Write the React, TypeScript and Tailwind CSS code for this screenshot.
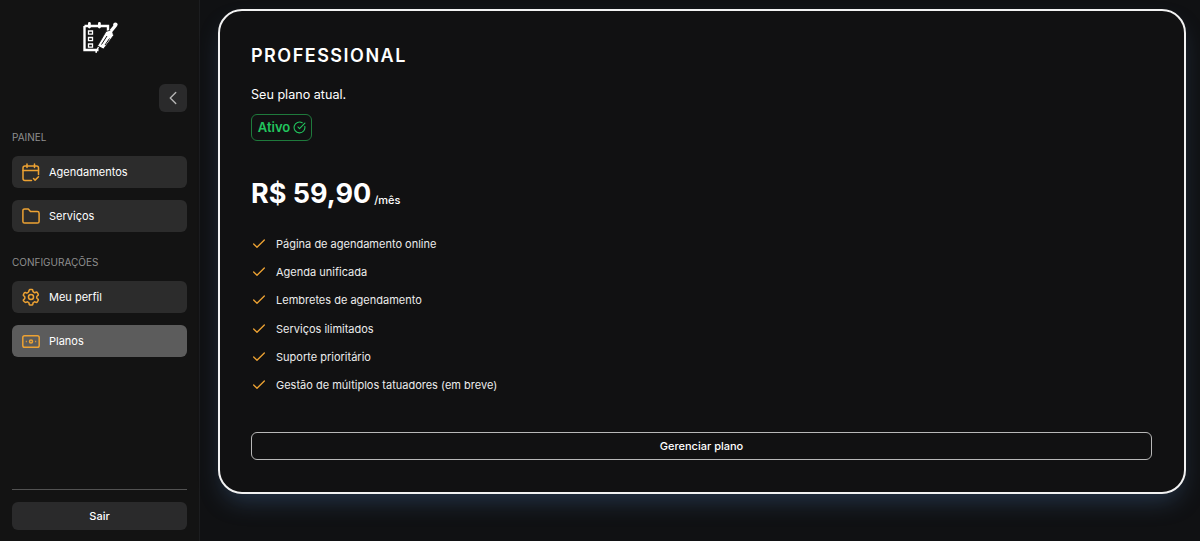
import { Check, ChevronLeft, CircleCheckBig } from "lucide-react";
import type { ReactNode } from "react";

const features = [
  "Página de agendamento online",
  "Agenda unificada",
  "Lembretes de agendamento",
  "Serviços ilimitados",
  "Suporte prioritário",
  "Gestão de múltiplos tatuadores (em breve)",
];

function Logo() {
  return (
    <svg width="36" height="32" viewBox="0 0 36 32" fill="none" className="text-white">
      <path d="M2.5 5h23.5v6M2.5 5v24h14" stroke="currentColor" strokeWidth="2.4" />
      <rect x="6" y="1" width="2.8" height="6.5" rx="1.4" fill="currentColor" />
      <rect x="16" y="1" width="2.8" height="6.5" rx="1.4" fill="currentColor" />
      <path d="M6.5 10h4v3.2h-4zM6.5 16.5h4v3.2h-4zM6.5 23h4v3.2h-4z" stroke="currentColor" strokeWidth="1.3" />
      <path d="M15.5 25 24 10.5l6-2 1.5 6-10 13.5z" fill="currentColor" stroke="#111112" strokeWidth="0.8" />
      <path d="M29 10 33.5 4.5" stroke="currentColor" strokeWidth="3.4" />
      <circle cx="33.4" cy="3.6" r="2.2" fill="currentColor" />
      <path d="M19.5 23.5 25 15M23 24l4.5-6.5" stroke="#111112" strokeWidth="1" />
      <path d="M16.5 26l-2 3.5" stroke="currentColor" strokeWidth="1.4" />
      <rect x="13.4" y="30" width="1.6" height="1.8" fill="currentColor" />
    </svg>
  );
}

function CalendarIcon() {
  return (
    <svg width="18" height="19" viewBox="0 0 18 19" fill="none" stroke="#eda233" strokeWidth="1.5" strokeLinecap="round" strokeLinejoin="round">
      <path d="M9.5 17.5H3a2 2 0 0 1-2-2V5a2 2 0 0 1 2-2h11.5a2 2 0 0 1 2 2v6.5" />
      <path d="M5 1v3.5M12.5 1v3.5M1 7.5h15.5" />
      <path d="M11.5 15.5l1.6 1.6 3.4-3.4" />
    </svg>
  );
}

function FolderIcon() {
  return (
    <svg width="18" height="16" viewBox="0 0 18 16" fill="none" stroke="#eda233" strokeWidth="1.5" strokeLinejoin="round">
      <path d="M.9 2.6A1.7 1.7 0 0 1 2.6.9h3.7l2.2 2.6h6.9a1.7 1.7 0 0 1 1.7 1.7v8.2a1.7 1.7 0 0 1-1.7 1.7H2.6a1.7 1.7 0 0 1-1.7-1.7z" />
    </svg>
  );
}

function GearIcon() {
  return (
    <svg width="18" height="18" viewBox="0 0 24 24" fill="none" stroke="#eda233" strokeWidth="2" strokeLinecap="round" strokeLinejoin="round">
      <path d="M9.6 3c.1-.6.6-1 1.2-1h2.4c.6 0 1.1.4 1.2 1l.2 1.4c.1.4.4.8.8 1l1 .6c.4.2.8.3 1.2.1l1.3-.5c.6-.2 1.2 0 1.5.5l1.2 2.1c.3.5.2 1.2-.3 1.6l-1.1.9c-.3.3-.5.7-.5 1.1v1.1c0 .4.2.8.5 1.1l1.1.9c.5.4.6 1 .3 1.6l-1.2 2.1c-.3.5-.9.7-1.5.5l-1.3-.5c-.4-.2-.8-.1-1.2.1l-1 .6c-.4.2-.7.6-.8 1l-.2 1.4c-.1.6-.6 1-1.2 1h-2.4c-.6 0-1.1-.4-1.2-1l-.2-1.4c-.1-.4-.4-.8-.8-1l-1-.6c-.4-.2-.8-.3-1.2-.1l-1.3.5c-.6.2-1.2 0-1.5-.5L1.9 17c-.3-.5-.2-1.2.3-1.6l1.1-.9c.3-.3.5-.7.5-1.1v-1.1c0-.4-.2-.8-.5-1.1l-1.1-.9c-.5-.4-.6-1-.3-1.6l1.2-2.1c.3-.5.9-.7 1.5-.5l1.3.5c.4.2.8.1 1.2-.1l1-.6c.4-.2.7-.6.8-1z" />
      <circle cx="12" cy="12" r="3.4" />
    </svg>
  );
}

function BillIcon() {
  return (
    <svg width="18" height="13" viewBox="0 0 18 13" fill="none" stroke="#eda233" strokeWidth="1.5">
      <rect x="0.8" y="0.8" width="16.4" height="11.4" rx="1.8" />
      <circle cx="9" cy="6.5" r="1.5" />
      <path d="M3.8 6.5h1M13.2 6.5h1" />
    </svg>
  );
}

function NavItem({ icon, label, active }: { icon: ReactNode; label: string; active?: boolean }) {
  return (
    <button className={`flex h-[32px] w-full items-center gap-[9px] rounded-md px-[10px] text-[11px] font-normal text-white ${active ? "bg-[#5c5c5c]" : "bg-[#2c2c2c]"}`}>
      <span className="flex w-[18px] justify-center">{icon}</span>
      {label}
    </button>
  );
}

export default function App() {
  return (
    <div className="flex h-[541px] w-[1200px] overflow-hidden bg-[#101113] font-['Inter',sans-serif] text-white">
      <aside className="flex w-[200px] shrink-0 flex-col border-r border-[#1c1d1f] bg-[#131313] px-[12px]">
        <div className="flex h-[84px] justify-center pt-[21px]">
          <Logo />
        </div>
        <div className="flex justify-end">
          <button className="flex h-[28px] w-[28px] items-center justify-center rounded-md bg-[#2a2a2b] text-[#b5b5b5]">
            <ChevronLeft size={22} strokeWidth={1.5} />
          </button>
        </div>
        <p className="mt-[19px] text-[10px] leading-[13px] font-normal text-[#8f8f8f]">PAINEL</p>
        <div className="mt-[12px] flex flex-col gap-3">
          <NavItem icon={<CalendarIcon />} label="Agendamentos" />
          <NavItem icon={<FolderIcon />} label="Serviços" />
        </div>
        <p className="mt-[24px] text-[10px] leading-[13px] font-normal text-[#8f8f8f]">CONFIGURAÇÕES</p>
        <div className="mt-[12px] flex flex-col gap-3">
          <NavItem icon={<GearIcon />} label="Meu perfil" />
          <NavItem icon={<BillIcon />} label="Planos" active />
        </div>
        <div className="mt-auto mb-[11px] flex flex-col gap-3">
          <hr className="border-t border-[#525252]" />
          <button className="h-[28px] w-full rounded-md bg-[#2a2a2b] text-[11px] font-medium text-white">Sair</button>
        </div>
      </aside>

      <main className="flex-1 pt-[9px] pr-[14px] pl-[18px]">
        <section className="flex h-[485px] flex-col rounded-[24px] border-2 border-[#f2f2f2] bg-[#111112] pt-[31px] pr-[32px] pl-[31px] shadow-[0_12px_24px_-6px_rgba(70,110,160,0.4)]">
          <h1 className="text-lg leading-[28px] font-semibold tracking-[1.5px]">PROFESSIONAL</h1>
          <p className="mt-[15px] text-[12.6px] leading-[20px]">Seu plano atual.</p>
          <span className="mt-[9px] inline-flex h-[27px] w-[61px] items-center justify-center gap-[3px] rounded-md border border-[#1f7a3c] pl-[1px] text-[13px] font-semibold text-[#22c55e]">
            Ativo
            <CircleCheckBig size={13} />
          </span>
          <div className="mt-[35px] flex items-end gap-[3px]">
            <span className="text-[27px] leading-[36px] font-bold">R$ 59,90</span>
            <span className="mb-[4px] text-[11px] leading-[16px] font-medium">/mês</span>
          </div>
          <ul className="mt-[24px] flex flex-col gap-[12.2px]">
            {features.map((feature) => (
              <li key={feature} className="flex h-[16px] items-center gap-[9px] text-[11px] leading-[16px] text-[#ececec]">
                <Check size={16} className="text-[#eda233]" />
                {feature}
              </li>
            ))}
          </ul>
          <button className="mt-[39px] h-[28px] w-full rounded-md border border-[#b8b8b8] pt-[1px] text-[11px] font-medium text-white">
            Gerenciar plano
          </button>
        </section>
      </main>
    </div>
  );
}
